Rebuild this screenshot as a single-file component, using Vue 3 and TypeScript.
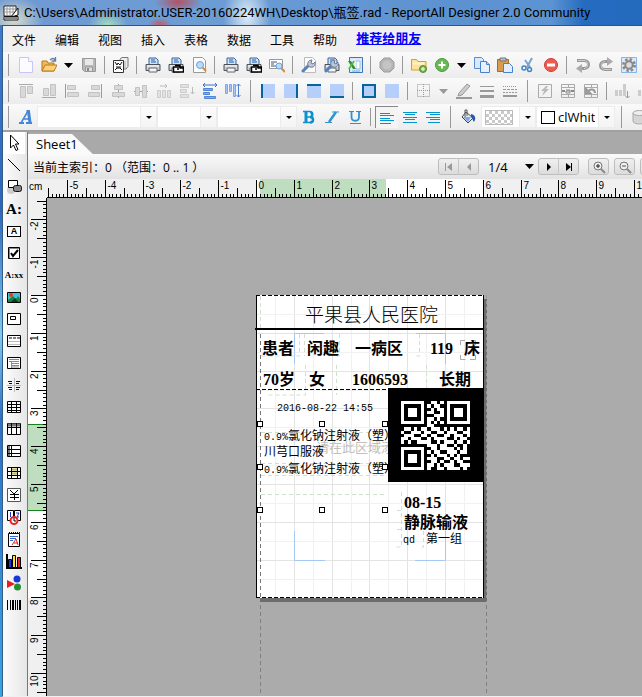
<script setup lang="ts">
import { computed, onBeforeUnmount, onMounted, ref } from 'vue'

interface ToolItem {
  kind: 'icon' | 'arrow' | 'sep' | 'group'
  name?: string
  label?: string
}

const icon = (name: string, label: string): ToolItem => ({ kind: 'icon', name, label })
const arrow: ToolItem = { kind: 'arrow' }
const sep: ToolItem = { kind: 'sep' }
const group: ToolItem = { kind: 'group' }

const printer =
  '<path d="M4 1h7l2 2v5H4z" fill="#cfe3fb" stroke="#3a6296"/><path d="M6 3h4M6 5h5" stroke="#1d5fb0"/><path d="M1 7.500h14v6H1z" fill="#c9cdd2" stroke="#4b5158"/><path d="M2 9h12" stroke="#fff"/><path d="M4 11h8v4H4z" fill="#f3f5f7" stroke="#666"/>'
const lens = (x: number, y: number, r: number) =>
  `<path d="M${x + 2} ${y + 2}l4 4" stroke="#d08b45" stroke-width="2"/><circle cx="${x}" cy="${y}" r="${r}" fill="#b7dbfb" stroke="#6ea3d8"/>`
const wrench =
  '<path d="M2 14l6-6" stroke="#5781bd" stroke-width="3" stroke-linecap="round"/><path d="M7 9c-1-4 1-6 4-6l-1 3 2 1 2-2c1 4-2 6-5 5z" fill="#bcc8da" stroke="#707b90"/>'

const icons: Record<string, string> = {
  app: '<path d="M1 1h12v10H1z" fill="#fff" stroke="#222"/><path d="M4 1v10M7 1v10M10 1v10M1 4h12M1 7h12" stroke="#999"/><path d="M15 3v7L8 12z" fill="#fff" stroke="#111"/><path d="M1 11.500h14v3.500H1z" fill="#fff" stroke="#111"/><path d="M3 12v2M5 12v2M7 12v2M9 12v2M11 12v2M13 12v2" stroke="#111"/>',
  new: '<path d="M1.500.5h9l4 4v11h-13z" fill="#fcfbff" stroke="#c9c6f5"/><path d="M10.500.5v4h4" fill="#fff" stroke="#c9c6f5"/>',
  open: '<path d="M1 14V4h5l1 2h6v8z" fill="#f2b95b" stroke="#b9781d"/><path d="M1 14l3-6h12l-3 6z" fill="#ffd27a" stroke="#b9781d"/><path d="M9 3c2-2 4-2 5 0M14.500 0v4h-4" fill="none" stroke="#617fa5" stroke-width="1.300"/>',
  save: '<path d="M1.500 1.500h13v13h-11l-2-2z" fill="#b8b8b8" stroke="#999"/><path d="M4 2h8v6H4z" fill="#e8e8e8"/><path d="M4.500 10h7v4.500h-7z" fill="#ddd" stroke="#999"/><path d="M6 11h2v3H6z" fill="#888"/>',
  preview:
    '<path d="M7 2l2-1.500h6v9L13 12H9z" fill="#eee" stroke="#777"/><path d="M.5 3.500h10v12H.5z" fill="#fff" stroke="#333"/><path d="M2 5l2 3 1-2 2 2 2-3M2 13l2-2h3l2 2M3 10h5" fill="none" stroke="#111"/><path d="M12 4v7" stroke="#aaa"/>',
  print: printer,
  printset: printer + '<path d="M5.500 10h10v5h-10z" fill="#fff" stroke="#000" stroke-width="1.500"/><path d="M7 8.500h5v3M12 11h3M9 12h2" stroke="#000" fill="none" stroke-width="1.500"/>',
  find: '<path d="M2.500.5h9l3 3v12h-12z" fill="#fbfbfb" stroke="#999"/>' + lens(9, 8, 3.5),
  findrec: '<path d="M.5 2.500h13v9H.5z" fill="#fff" stroke="#999"/><path d="M2 5h6M2 7h3M2 9h5" stroke="#456"/>' + lens(10, 9, 3),
  wrench: '<path d="M3.500.5h8l3 3v12h-11z" fill="#fbfbfb" stroke="#bbb"/>' + wrench,
  printwrench: printer + wrench,
  excel: '<path d="M2.500.5h13v15h-13z" fill="#dbe9fb" stroke="#3f74b8"/><path d="M9 4h4v8H9z" fill="#fff" stroke="#9bbce0"/><path d="M0 4h9v8H0z" fill="#e6f5e4"/><path d="M1 4h3l5 8H6z" fill="#2f8f35"/><path d="M8 4H6l-5 8h2z" fill="#57b257"/><path d="M5 14h8" stroke="#78aadd"/>',
  stop: '<path d="M5 1h6l4 4v6l-4 4H5l-4-4V5z" fill="#b5b5b5" stroke="#9c9c9c"/><circle cx="8" cy="8" r="4.500" fill="#c4c4c4"/>',
  folderadd:
    '<path d="M.5 13V2.500h5l1.500 2h8V13z" fill="#ffe39a" stroke="#d0a03e"/><path d="M2 6.500h11" stroke="#fff3cf" stroke-width="2"/><circle cx="12" cy="12" r="3.500" fill="#79b648" stroke="#568e2d"/><path d="M12 10v4M10 12h4" stroke="#fff"/>',
  add: '<circle cx="8" cy="8" r="6.500" fill="#67ba53" stroke="#4c9a3a"/><path d="M8 4.500v7M4.500 8h7" stroke="#fff" stroke-width="2"/>',
  copy: '<path d="M.5.5h7l2 2v9h-9z" fill="#d8e8fd" stroke="#5b8cd3"/><path d="M6.500 4.500h6l3 3v8h-9z" fill="#e6f1ff" stroke="#4a80cd"/><path d="M12.500 4.500v3h3" fill="#b8d2f5" stroke="#4a80cd"/>',
  paste:
    '<path d="M.5 2.500h11v12H.5z" fill="#d79c52" stroke="#a46c2a"/><path d="M3 1h6v3H3z" fill="#bcbcbc" stroke="#777"/><path d="M6.500 6.500h6l3 3v6h-9z" fill="#e1eefe" stroke="#4a80cd"/>',
  cut: '<path d="M12 1L7 10M5 3l5 7" stroke="#79a4cf" stroke-width="2"/><circle cx="4" cy="11" r="2" fill="none" stroke="#3f83c5" stroke-width="1.500"/><circle cx="9.500" cy="12.500" r="2" fill="none" stroke="#3f83c5" stroke-width="1.500"/>',
  del: '<circle cx="8" cy="8" r="6.500" fill="#ef5b51" stroke="#cf3d35"/><path d="M4 8h8" stroke="#fff" stroke-width="3"/>',
  undo: '<path d="M2 3.500h7c6 0 6 8 0 8H6" fill="none" stroke="#999" stroke-width="3"/><path d="M1 11.500l6-4.500v9z" fill="#aaa"/><path d="M3 3.500h6c5 0 5 8 0 8" fill="none" stroke="#ccc"/>',
  redo: '<path d="M14 12.500H7c-6 0-6-8 0-8h4" fill="none" stroke="#999" stroke-width="3"/><path d="M15 4.500L9 0v9z" fill="#aaa"/><path d="M13 12.500H7c-5 0-5-8 0-8" fill="none" stroke="#ccc"/>',
  gear: '<path d="M.5.5h15v15H.5z" fill="#dcebfc" stroke="#86b5ec"/><circle cx="8" cy="8" r="5.500" fill="none" stroke="#8a8a8a" stroke-width="3" stroke-dasharray="2.400 1.900"/><circle cx="8" cy="8" r="3.700" fill="#ddd" stroke="#8a8a8a" stroke-width="2"/>',
  al1: '<path d="M1 1.500h14" stroke="#aaa"/><path d="M2.500 3.500h5v11h-5zM9.500 3.500h5v7h-5z" fill="#d9d9d9" stroke="#c2c2c2"/>',
  al2: '<path d="M1 14.500h14" stroke="#aaa"/><path d="M2.500 5.500h5v7h-5zM9.500 1.500h5v11h-5z" fill="#d9d9d9" stroke="#c2c2c2"/>',
  al3: '<path d="M1.500 1v14" stroke="#999"/><path d="M3.500 2.500h8v4h-8zM3.500 9.500h11v4h-11z" fill="#d9d9d9" stroke="#c2c2c2"/>',
  al4: '<path d="M14.500 1v14" stroke="#999"/><path d="M4.500 2.500h8v4h-8zM1.500 9.500h11v4h-11z" fill="#d9d9d9" stroke="#c2c2c2"/>',
  al5: '<path d="M8.500 1v14" stroke="#999"/><path d="M4.500 2.500h8v4h-8zM2.500 9.500h12v4h-12z" fill="#d9d9d9" stroke="#c2c2c2"/>',
  al6: '<path d="M1 8.500h14" stroke="#999"/><path d="M2.500 4.500h4v8h-4zM9.500 2.500h4v12h-4z" fill="#d9d9d9" stroke="#c2c2c2"/>',
  al7: '<path d="M4 3h7M9 1l2 2-2 2" fill="none" stroke="#bbb"/><path d="M1.500 7.500h3v7h-3zM6.500 7.500h3v7h-3zM11.500 7.500h3v7h-3z" fill="#e2e2e2" stroke="#ccc"/>',
  al8: '<path d="M13.500 4v7M11.500 9l2 2 2-2" fill="none" stroke="#bbb"/><path d="M1.500 1.500h8v3h-8zM1.500 6.500h6v3h-6zM1.500 11.500h8v3h-8z" fill="#e2e2e2" stroke="#ccc"/>',
  al9: '<path d="M1 2h14M3 0L1 2l2 2M13 0l2 2-2 2" fill="none" stroke="#3a6fc4"/><path d="M1.500 5.500h9v2h-9zM1.500 9.500h6v2h-6zM2.500 13.500h11v2h-11z" fill="#7ea9ee" stroke="#5484d6"/>',
  al10: '<path d="M13.500 1v13M11.500 3l2-2 2 2M11.500 12l2 2 2-2" fill="none" stroke="#4c7fd0"/><path d="M.5 1.500h2v9h-2zM4.500 1.500h2v7h-2zM8.500 1.500h2v12h-2z" fill="#a9c6f5" stroke="#7fa6e6"/>',
  b1: '<path d="M1 1h14v14H1z" fill="#b5cffa"/><path d="M2 1v14" stroke="#05659c" stroke-width="2"/>',
  b2: '<path d="M1 1h14v14H1z" fill="#b5cffa"/><path d="M14 1v14" stroke="#05659c" stroke-width="2"/>',
  b3: '<path d="M1 1h14v14H1z" fill="#b5cffa"/><path d="M1 2h14" stroke="#05659c" stroke-width="2"/>',
  b4: '<path d="M1 1h14v14H1z" fill="#b5cffa"/><path d="M1 14h14" stroke="#05659c" stroke-width="2"/>',
  b5: '<path d="M2 2h12v12H2z" fill="#b5cffa" stroke="#05659c" stroke-width="2"/>',
  b6: '<path d="M1 1h14v14H1z" fill="#b5cffa"/>',
  b7: '<path d="M1.500 1.500h12v12h-12zM7.500 1v13M1 7.500h13" fill="none" stroke="#999" stroke-dasharray="1 1"/>',
  pen: '<path d="M3 10l8-9 3 2-8 9-4 1z" fill="#ccc" stroke="#999"/><path d="M0 15h16" stroke="#999" stroke-width="2"/>',
  lines: '<path d="M1 3.500h14" stroke="#999"/><path d="M1 8h14" stroke="#999" stroke-width="2"/><path d="M1 13.500h14" stroke="#999" stroke-width="3"/>',
  dashes: '<path d="M1 3.500h14" stroke="#999" stroke-dasharray="1 1"/><path d="M1 6.500h14" stroke="#999" stroke-dasharray="3 1"/><path d="M1 9.500h14" stroke="#999" stroke-dasharray="2 1"/><path d="M1 13h14" stroke="#999" stroke-width="2"/>',
  flash: '<path d="M1.500 1.500h13v13h-13z" fill="#f3f3f3" stroke="#aaa"/><path d="M9 3L4 8h3l-2 5 7-7H9l2-3z" fill="#bbb"/>',
  merge: '<path d="M1.500 1.500h13v13h-13zM1 4.500h14M1 11.500h14M8.500 1v3M8.500 12v3" fill="none" stroke="#aaa"/><path d="M2 8h3M11 8h3" stroke="#888" stroke-width="2"/><path d="M6 7h4v3H6V8h4" fill="none" stroke="#888"/>',
  split: '<path d="M1.500 1.500h13v13h-13zM1 4.500h14M1 11.500h14M8.500 1v3M8.500 12v3" fill="none" stroke="#aaa"/><path d="M3 6v4h4zM5 9c2-4 7-3 7 1" fill="none" stroke="#999" stroke-width="2"/>',
  cols: '<path d="M1.500 7v6M5.500 7v6" stroke="#ccc" stroke-width="3"/><path d="M9.500 1v12" stroke="#ccc" stroke-width="3"/><path d="M12.500 8v7M10.500 13l2 2 2-2" stroke="#999" fill="none"/>',
  fontA: '<path d="M1 14h5M8 14h6" stroke="#4385d7" stroke-width="2"/><path d="M3.500 13l6-10" stroke="#4385d7" stroke-width="1.500"/><path d="M8.500 2.500h2l1.500 11" fill="none" stroke="#4385d7" stroke-width="3"/><path d="M6 10h5" stroke="#4385d7" stroke-width="1.500"/>',
  bold: '<path d="M2 2.500h7M2 13.500h7M6 8h4" stroke="#0b91ce" stroke-width="1.500"/><path d="M5 2v12" stroke="#0b91ce" stroke-width="3"/><path d="M9 3c3 0 3 5 0 5c4 0 4 5.500 0 5.500" fill="none" stroke="#0b91ce" stroke-width="2.500"/>',
  italic: '<path d="M8 3h7M1 13.500h7" stroke="#2f94ce"/><path d="M12 3L5 13" stroke="#2f94ce" stroke-width="2.500"/>',
  under: '<path d="M2 2.500h5M9 2.500h5" stroke="#2f94ce"/><path d="M4.500 2v6c0 5 7.500 5 7.500 0V2" fill="none" stroke="#2f94ce" stroke-width="1.800"/><path d="M3 14.500h11" stroke="#2f94ce"/>',
  left: '<path d="M1 3.500h10M1 5.500h14M1 8.500h10M1 10.500h14M1 13.500h11" stroke="#0097cf"/>',
  center: '<path d="M1 3.500h14M3 5.500h10M1 8.500h14M3 10.500h10M1 13.500h14" stroke="#0097cf"/>',
  right: '<path d="M1 3.500h14M5 5.500h10M1 8.500h14M5 10.500h10M3 13.500h12" stroke="#0097cf"/>',
  bucket: '<path d="M6 3l7 6-5 5-6-6z" fill="#e7eef8" stroke="#444"/><path d="M7 7V1H5v7" fill="none" stroke="#555"/><path d="M11 5c5 1 5 5 3 8-2-2-1-4-3-5z" fill="#2957a8"/><path d="M3 8h8l-3 5z" fill="#7da8e6"/>',
  db: '<path d="M2 4v8c0 4 13 4 13 0V4" fill="#d5d5d5" stroke="#aaa"/><ellipse cx="8.500" cy="4" rx="6.500" ry="2.500" fill="#eee" stroke="#aaa"/>',
  pick: '<path d="M4.500 0v13l3-3 2.500 5.500 2-1L9.500 9H13z" fill="#fff" stroke="#000"/>',
  line: '<path d="M2 2l12 12" stroke="#000"/>',
  shapes: '<circle cx="5" cy="11" r="4" fill="#ccc"/><path d="M2.500 1.500h9v7h-9z" fill="#fff" stroke="#000"/><rect x="7.500" y="6.500" width="8" height="6" rx="2" fill="#888" stroke="#111"/>',
  checkbox: '<path d="M2.500 2.500h11v11h-11z" fill="#fff" stroke="#000"/><path d="M3 3.500h10M3.500 3v10" stroke="#888"/><path d="M5 8l2 3 5-6" fill="none" stroke="#000" stroke-width="2"/>',
  image: '<path d="M1.500 3.500h13v10h-13z" fill="#37c5e2" stroke="#000"/><path d="M2 11l5-4 3 3 2-3 2 3v3H2z" fill="#178540"/><circle cx="5" cy="6" r="2" fill="#e43b22"/><path d="M5 13l4-4 3 4z" fill="#073b24"/>',
  box: '<path d="M1.500 2.500h13v11h-13z" fill="#fff" stroke="#000"/><path d="M4.500 5.500h5v3h-5z" fill="#fff" stroke="#000"/>',
  band: '<path d="M1.500 2.500h13v11h-13z" fill="#fff" stroke="#000"/><path d="M3 5h11" stroke="#000" stroke-dasharray="3 1"/><path d="M2 8.500h12M2 11.500h12" stroke="#bbb"/>',
  sub: '<path d="M1.500 2.500h13v11h-13z" fill="#fff" stroke="#000"/><path d="M3 4.500h10M3 6.500h10M6 8.500h7M6 10.500h7M6 12h7M5.500 6v7" stroke="#888"/>',
  cross: '<path d="M8.500 1v14M1 8.500h14" stroke="#bbb"/><path d="M2 4.500h4M3 6.500h3M2 10.500h4M3 12.500h3M10 4.500h4M10 6.500h3M10 10.500h4M10 12.500h3" stroke="#111"/>',
  table: '<path d="M1.500 2.500h13v11h-13zM1 5.500h14M1 8.500h14M1 11.500h14M5.500 2v12M10.500 2v12" fill="#fff" stroke="#000"/>',
  colhead: '<path d="M1.500 2.500h13v11h-13z" fill="#fff" stroke="#000"/><path d="M2 4h12" stroke="#777" stroke-width="3"/><path d="M1 6.500h14M5.500 2v12M10.500 2v12" stroke="#000"/>',
  rowhead: '<path d="M1.500 2.500h13v11h-13z" fill="#fff" stroke="#000"/><path d="M3 3v10" stroke="#777" stroke-width="2"/><path d="M5.500 2v12M1 6.500h14M1 10.500h14" stroke="#000"/>',
  crosstab: '<path d="M1.500 2.500h13v11h-13z" fill="#fff" stroke="#000"/><path d="M5.500 2v12M11.500 2v12M1 6.500h14M1 10.500h14" stroke="#000"/><path d="M6 4.500h5M6 8.500h5" stroke="#c7b83e" stroke-width="2"/>',
  money: '<path d="M1.500 1.500h13v13h-13z" fill="#fff" stroke="#555"/><path d="M4 3l4 4 4-4M8.500 7v6M4 7.500h9M4 10.500h9" fill="none" stroke="#000"/>',
  pages: '<path d="M1.500 1.500h6v10h-6zM8.500 1.500h6v10h-6z" fill="#fff" stroke="#000"/><path d="M4.500 3v5M10 4h3l-2 4h2" stroke="#2233bb" fill="none"/><circle cx="8" cy="11.500" r="3.500" fill="#fff" stroke="#e22" stroke-width="2"/><path d="M8 9v3h2" stroke="#000" fill="none"/>',
  note: '<path d="M2.500 2.500h11v13h-11z" fill="#fff" stroke="#000"/><path d="M3 1.500h11" stroke="#000" stroke-dasharray="1 1"/><path d="M4 5.500h8M4 7.500h6M4 9.500h3" stroke="#36c"/><path d="M6 14l4-6 2 6M8 12h4" fill="none" stroke="#d22"/>',
  chart: '<path d="M1 1v14h15" stroke="#000" stroke-width="2" fill="none"/><path d="M2.500 6.500h3v8h-3z" fill="#1438e8" stroke="#000"/><path d="M6.500 2.500h3v12h-3z" fill="#ffe322" stroke="#000"/><path d="M11.500 4.500h3v10h-3z" fill="#e82222" stroke="#000"/>',
  balls: '<circle cx="11" cy="4" r="3.500" fill="#1737d8"/><path d="M1 5l8 4-8 4z" fill="#e61f1f"/><circle cx="11.500" cy="12" r="3.500" fill="#25902f"/>',
  barcode: '<path d="M1.500 3v10M4.500 3v10M9.500 3v10M11.500 3v10" stroke="#000"/><path d="M7 3v10M14 3v10" stroke="#000" stroke-width="2"/>',
  first: '<path d="M4.500 4v8" stroke="#999"/><path d="M11 4v8L6 8z" fill="#999"/>',
  prev: '<path d="M10 4v8L6 8z" fill="#999"/>',
  next: '<path d="M6 4v8l4-4z" fill="#000"/>',
  last: '<path d="M10.500 4v8" stroke="#000"/><path d="M5 4v8l5-4z" fill="#000"/>',
  zin: '<path d="M10 10l4 4" stroke="#888" stroke-width="2"/><circle cx="7" cy="7" r="4" fill="#eee" stroke="#777"/><path d="M7 5v4M5 7h4" stroke="#222"/>',
  zout: '<path d="M10 10l4 4" stroke="#888" stroke-width="2"/><circle cx="7" cy="7" r="4" fill="#eee" stroke="#777"/><path d="M5 7h4" stroke="#555"/>',
}

const menus = ['文件', '编辑', '视图', '插入', '表格', '数据', '工具', '帮助']

const standardBar: ToolItem[] = [
  icon('new', 'New'), icon('open', 'Open'), arrow, icon('save', 'Save'), sep,
  icon('preview', 'Page setup'), sep,
  icon('print', 'Print'), icon('printset', 'Print settings'), icon('find', 'Preview'), sep,
  icon('print', 'Print report'), icon('printset', 'Report print settings'), icon('findrec', 'Report preview'), sep,
  icon('wrench', 'Options'), icon('printwrench', 'Printer options'), icon('excel', 'Export'), sep,
  icon('stop', 'Stop'), sep,
  icon('folderadd', 'Add folder'), icon('add', 'Add'), arrow,
  icon('copy', 'Copy'), icon('paste', 'Paste'), icon('cut', 'Cut'), icon('del', 'Delete'), sep,
  icon('undo', 'Undo'), icon('redo', 'Redo'), icon('gear', 'Settings'),
]

const layoutBar: ToolItem[] = [
  ...['al1', 'al2', 'al3', 'al4', 'al5', 'al6', 'al7', 'al8', 'al9', 'al10'].map((n, i) => icon(n, `Align ${i + 1}`)),
  group,
  icon('b1', 'Left border'), icon('b2', 'Right border'), icon('b3', 'Top border'), icon('b4', 'Bottom border'), sep,
  icon('b5', 'Outline'), icon('b6', 'No border'), sep,
  icon('b7', 'Grid border'), arrow, icon('pen', 'Line colour'), icon('lines', 'Line width'), icon('dashes', 'Line style'), group,
  icon('flash', 'Quick cell'), icon('merge', 'Merge cells'), icon('split', 'Split cells'), sep,
  icon('cols', 'Insert column'), icon('cols', 'Delete column'),
]

interface PaletteItem { name?: string; text?: string; label: string }
const palette: PaletteItem[] = [
  { name: 'pick', label: 'Select' }, { name: 'line', label: 'Line' }, { name: 'shapes', label: 'Shape' },
  { text: 'A:', label: 'Label' }, { text: 'A', label: 'Text box' }, { name: 'checkbox', label: 'Check box' },
  { text: 'A:xx', label: 'Field' }, { name: 'image', label: 'Image' }, { name: 'box', label: 'Panel' },
  { name: 'band', label: 'Band' }, { name: 'sub', label: 'Sub report' }, { name: 'cross', label: 'Cross' },
  { name: 'table', label: 'Table' }, { name: 'colhead', label: 'Column header' }, { name: 'rowhead', label: 'Row header' },
  { name: 'crosstab', label: 'Cross table' }, { name: 'money', label: 'Currency' }, { name: 'pages', label: 'Page number' },
  { name: 'note', label: 'Note' }, { name: 'chart', label: 'Chart' }, { name: 'balls', label: 'Graph' },
  { name: 'barcode', label: 'Barcode' },
]

const CM = 37.8
const ORIGIN_X = 209
const ORIGIN_Y = 97

interface Tick { pos: number; level: number; text: string }
function ticks(origin: number, length: number): Tick[] {
  const out: Tick[] = []
  const first = Math.ceil((-origin * 10) / CM)
  const last = Math.floor(((length - origin) * 10) / CM)
  for (let i = first; i <= last; i++) {
    const level = i % 10 === 0 ? 2 : i % 5 === 0 ? 1 : 0
    out.push({ pos: Math.round(origin + (i * CM) / 10) + 0.5, level, text: level === 2 ? String(i / 10) : '' })
  }
  return out
}

const surface = ref<SVGSVGElement>()
const extent = ref({ w: 0, h: 0 })
const measure = () => {
  const box = surface.value?.getBoundingClientRect()
  if (box) extent.value = { w: box.width, h: box.height }
}
onMounted(() => {
  measure()
  window.addEventListener('resize', measure)
})
onBeforeUnmount(() => window.removeEventListener('resize', measure))

const hTicks = computed(() => ticks(ORIGIN_X, extent.value.w))
const vTicks = computed(() => ticks(ORIGIN_Y, extent.value.h))
const hLen = [4, 10, 18]
const vLen = [4, 10, 16]

const gridX = Array.from({ length: 11 }, (_, i) => ({ p: Math.round((i + 1) * 18.9) + 0.5, major: i % 2 === 1 }))
const gridY = Array.from({ length: 15 }, (_, i) => ({ p: Math.round((i + 1) * 18.9) + 0.5, major: i % 2 === 1 }))

const qr = [
  '111111100110101111111',
  '100000101011001000001',
  '101110100101101011101',
  '101110101100101011101',
  '101110100011101011101',
  '100000101101001000001',
  '111111101010101111111',
  '000000001100000000000',
  '011010110111010101101',
  '100111011001101110011',
  '011100110110011011101',
  '110111001011110010110',
  '101001111001011101101',
  '000000001110110010010',
  '111111100110111101010',
  '100000101011001110110',
  '101110100101110101000',
  '101110101110011011011',
  '101110100110100101100',
  '100000101101011100111',
  '111111101001101111010',
]
const qrCells = qr.flatMap((row, y) => [...row].map((v, x) => ({ x, y, on: v === '1' }))).filter((c) => c.on)

const handles = [4, 66, 129]
  .flatMap((x) => [129, 172, 215].map((y) => ({ x, y })))
  .filter((h) => !(h.x === 66 && h.y === 172))
</script>

<template>
  <div class="app">
    <header class="title">
      <svg class="ico" viewBox="0 0 16 16" v-html="icons.app" />
      <h1>C:\Users\Administrator.USER-20160224WH\Desktop\瓶签.rad - ReportAll Designer 2.0 Community</h1>
    </header>

    <div class="frame">
      <nav class="menu">
        <button v-for="m in menus" :key="m" type="button">{{ m }}</button>
        <a href="#">推荐给朋友</a>
      </nav>

      <div v-for="(bar, b) in [standardBar, layoutBar]" :key="b" class="bar">
        <span class="grip" />
        <template v-for="(t, i) in bar" :key="i">
          <button v-if="t.kind === 'icon'" type="button" class="tool" :aria-label="t.label">
            <svg class="ico" viewBox="0 0 16 16" v-html="icons[t.name ?? '']" />
          </button>
          <button v-else-if="t.kind === 'arrow'" type="button" class="drop" :class="{ dim: b === 1 }" aria-label="More">
            <svg width="9" height="5" viewBox="0 0 9 5"><path d="M0 0h9L4.500 5z" fill="currentColor" /></svg>
          </button>
          <span v-else :class="t.kind" />
        </template>
      </div>

      <div class="bar">
        <span class="grip" />
        <button type="button" class="tool" aria-label="Font"><svg class="ico" viewBox="0 0 16 16" v-html="icons.fontA" /></button>
        <label class="combo font"><select aria-label="Font name"><option></option></select><i /></label>
        <label class="combo style"><select aria-label="Font style"><option></option></select><i /></label>
        <label class="combo size"><select aria-label="Font size"><option></option></select><i /></label>
        <button v-for="n in ['bold', 'italic', 'under']" :key="n" type="button" class="tool" :aria-label="n">
          <svg class="ico" viewBox="0 0 16 16" v-html="icons[n]" />
        </button>
        <span class="sep" />
        <button v-for="n in ['left', 'center', 'right']" :key="n" type="button" class="tool" :class="{ pressed: n === 'left' }" :aria-label="n">
          <svg class="ico" viewBox="0 0 16 16" v-html="icons[n]" />
        </button>
        <span class="group" />
        <button type="button" class="tool" aria-label="Fill"><svg class="ico" viewBox="0 0 16 16" v-html="icons.bucket" /></button>
        <label class="combo pattern"><select aria-label="Pattern"><option></option></select><b class="checker" /><i /></label>
        <label class="combo color"><b class="swatch" /><select aria-label="Colour"><option>clWhite</option></select><i /></label>
        <span class="group" />
        <button type="button" class="tool" aria-label="Database"><svg class="ico" viewBox="0 0 16 16" v-html="icons.db" /></button>
      </div>

      <div class="work">
        <aside class="palette">
          <button v-for="(p, i) in palette" :key="p.label" type="button" :class="{ active: i === 0 }" :aria-label="p.label">
            <svg v-if="p.name" class="ico" viewBox="0 0 16 16" v-html="icons[p.name]" />
            <span v-else :class="['glyph', { big: p.text === 'A:', boxed: p.text === 'A' }]">{{ p.text }}</span>
          </button>
        </aside>

        <main>
          <div class="tabs"><button type="button" class="tab">Sheet1</button></div>
          <div class="info">
            <span class="status">当前主索引：0 （范围：0 .. 1 ）</span>
            <div class="pair">
              <button type="button" aria-label="First"><svg class="ico" viewBox="0 0 16 16" v-html="icons.first" /></button>
              <button type="button" aria-label="Previous"><svg class="ico" viewBox="0 0 16 16" v-html="icons.prev" /></button>
            </div>
            <button type="button" class="page">1/4 <svg width="9" height="5" viewBox="0 0 9 5"><path d="M0 0h9L4.500 5z" /></svg></button>
            <div class="pair">
              <button type="button" aria-label="Next"><svg class="ico" viewBox="0 0 16 16" v-html="icons.next" /></button>
              <button type="button" aria-label="Last"><svg class="ico" viewBox="0 0 16 16" v-html="icons.last" /></button>
            </div>
            <div class="zooms">
              <button type="button" class="zoom" aria-label="Zoom in"><svg class="ico" viewBox="0 0 16 16" v-html="icons.zin" /></button>
              <button type="button" class="zoom" aria-label="Zoom out"><svg class="ico" viewBox="0 0 16 16" v-html="icons.zout" /></button>
              <button type="button" class="zoom" aria-label="Fit" />
            </div>
          </div>

          <div class="design">
            <span class="unit">cm</span>
            <svg class="hruler">
              <rect x="209" width="228" height="19" fill="#fff" />
              <rect x="213" width="126" height="19" fill="#bfddbf" />
              <g v-for="(t, i) in hTicks" :key="i">
                <path :d="`M${t.pos} 19v${-hLen[t.level]}`" stroke="#000" />
                <text v-if="t.text" :x="t.pos + 2" y="10">{{ t.text }}</text>
              </g>
              <rect y="18" width="100%" height="1" />
            </svg>
            <svg class="vruler">
              <rect y="97" width="19" height="303" fill="#fff" />
              <rect y="226" width="19" height="87" fill="#bfddbf" />
              <path d="M0 226.500h19M0 312.500h19" stroke="#178217" />
              <g v-for="(t, i) in vTicks" :key="i">
                <path :d="`M19 ${t.pos}h${-vLen[t.level]}`" stroke="#000" />
                <text v-if="t.text" :transform="`translate(10 ${t.pos + 2}) rotate(-90)`" text-anchor="end">{{ t.text }}</text>
              </g>
              <rect x="18" width="1" height="100%" />
            </svg>

            <svg ref="surface" class="canvas">
              <g :transform="`translate(${ORIGIN_X} ${ORIGIN_Y})`">
                <path d="M4.500 303v800M230.500 303v800" stroke="#808080" stroke-dasharray="4 3" />
                <rect x="4" y="4" width="227" height="303" fill="#6c6c6c" />
                <path d="M230.500 0v307" stroke="#999" stroke-dasharray="3 3" />
                <rect width="228" height="303" fill="#fff" />
                <path v-for="g in gridX" :key="'x' + g.p" :d="`M${g.p} 1v301`" :stroke="g.major ? '#e3e3e3' : '#f1f1f1'" />
                <path v-for="g in gridY" :key="'y' + g.p" :d="`M1 ${g.p}h226`" :stroke="g.major ? '#e3e3e3' : '#f1f1f1'" />
                <path d="M4.500 1v32M43.500 39v22H5M48.500 39v22M83.500 39v22h-5M163.500 39v22h-5M49.500 70v30H12M80.500 70v30M170.500 70v30M5 137.500h124M5 168.500h124M5 180.500h124M5 199.500h124M145.500 197v55h-5M141 215.500h5M141 234.500h5M167.500 236v16h-5" fill="none" stroke="#cfe0cf" stroke-dasharray="4 3" />
                <path d="M4.500 39v264" stroke="#777" stroke-dasharray="4 3" />
                <path d="M38.500 69V38.500H68M160 38.500h29.500V69M38.500 236v29.500H69M159 265.500h30.500V236" fill="none" stroke="#a5c9f2" />
                <path d="M209 45.500h-4.500V50M215 45.500h4.500V50M204.500 60v4.500h5M214 64.500h5.500V60" fill="none" stroke="#aaa" />
                <path d="M.5 0v303M227.500 0v303" stroke="#000" />
                <path d="M0 .5h228M0 302.500h228" stroke="#000" stroke-dasharray="4 2" />
                <path d="M0 94.500h228" stroke="#000" stroke-dasharray="4 2" />
                <rect x="-1" y="33" width="229" height="2" />

                <text class="ghost" x="60" y="157">请在此区域添</text>
                <text class="head" x="49" y="27">平果县人民医院</text>
                <g class="strong">
                  <text x="6" y="59">患者</text>
                  <text x="51" y="59">闲趣</text>
                  <text x="99" y="59">一病区</text>
                  <text x="174" y="59">119</text>
                  <text x="208" y="59">床</text>
                  <text x="7" y="90">70岁</text>
                  <text x="53" y="90">女</text>
                  <text x="96" y="90">1606593</text>
                  <text x="183" y="90">长期</text>
                  <text x="148" y="213">08-15</text>
                  <text x="148" y="233">静脉输液</text>
                </g>
                <g class="plain">
                  <text x="21" y="116"><tspan class="mono">2016-08-22 14:55</tspan></text>
                  <text x="8" y="145"><tspan class="mono">0.9%</tspan>氯化钠注射液（塑）</text>
                  <text x="8" y="161">川芎口服液</text>
                  <text x="8" y="178"><tspan class="mono">0.9%</tspan>氯化钠注射液（塑）</text>
                  <text x="147" y="248"><tspan class="mono">qd</tspan></text>
                  <text x="170" y="248">第一组</text>
                </g>

                <rect x="132" y="93" width="96" height="94" />
                <svg x="145" y="106" width="69" height="69" viewBox="0 0 21 21" shape-rendering="crispEdges">
                  <rect v-for="c in qrCells" :key="`${c.x}-${c.y}`" :x="c.x" :y="c.y" width="1" height="1" fill="#fff" />
                </svg>
                <rect v-for="h in handles" :key="`${h.x}-${h.y}`" :x="h.x - 2.5" :y="h.y - 2.5" width="5" height="5" fill="#fff" stroke="#000" />
              </g>
            </svg>
          </div>
        </main>
      </div>
    </div>
  </div>
</template>

<style>
body {
  margin: 0;
  background: #f0f0f0;
}
</style>

<style scoped>
.app {
  height: 100vh;
  display: flex;
  flex-direction: column;
  overflow: hidden;
  background: linear-gradient(#3f7dcd, #2f66bb 30%, #7fcdec 48%, #2f6fc2 60%, #3ba5e0);
  font-family: "Open Sans", "Noto Sans CJK SC", sans-serif;
  font-size: 12px;
  color: #000;
}
button,
select {
  font: inherit;
  color: inherit;
  border: 0;
  padding: 0;
  margin: 0;
  background: none;
}
.ico {
  display: block;
  flex: none;
  width: 16px;
  height: 16px;
}
.title {
  flex: none;
  height: 25px;
  display: flex;
  align-items: center;
  gap: 5px;
  padding-left: 3px;
  background:
    radial-gradient(ellipse 30px 24px at 14px 20px, #d6dccb, transparent),
    radial-gradient(ellipse 20px 12px at 108px 24px, #a2d9bd, transparent),
    radial-gradient(ellipse 24px 10px at 178px 2px, #b5505f, transparent),
    radial-gradient(ellipse 12px 6px at 160px 24px, #b8606c, transparent),
    radial-gradient(ellipse 24px 36px at 247px 16px, #e0edf6, transparent),
    linear-gradient(90deg, #6f98d2, #6d9dd5 30%, #5d92d0 70%, #5b93d3 86%, #256bbf 91%, #246abd);
}
.title h1 {
  margin: 0;
  font-family: Roboto, "Noto Sans CJK SC", sans-serif;
  font-size: 13px;
  font-weight: 400;
  line-height: 20px;
  white-space: nowrap;
}
.frame {
  flex: 1;
  min-height: 0;
  display: flex;
  flex-direction: column;
  margin-left: 2px;
  border-left: 1px solid #345c8b;
  border-top: 1px solid #33527c;
  border-bottom: 1px solid #f0f0f0;
  background: #f0f0f0;
}
.menu {
  flex: none;
  height: 26px;
  display: flex;
  align-items: center;
  gap: 19px;
  padding-left: 9px;
  white-space: nowrap;
}
.menu a {
  color: #00f;
  font-size: 13px;
  font-weight: 700;
  line-height: 16px;
  padding-bottom: 2px;
}
.menu button {
  padding-top: 2px;
}
.bar {
  flex: none;
  height: 26px;
  display: flex;
  align-items: center;
  overflow: hidden;
  background: linear-gradient(#fafafa, #ececec);
}
.grip {
  flex: none;
  box-sizing: border-box;
  width: 6px;
  height: 22px;
  margin-right: 5px;
  border-right: 1px solid #999;
}
.tool {
  flex: none;
  width: 23px;
  height: 22px;
  display: flex;
  align-items: center;
  justify-content: center;
}
.pressed {
  box-sizing: border-box;
  border-left: 1px solid #888;
  border-top: 1px solid #888;
  background: #f4f4f4;
}
.drop {
  flex: none;
  width: 17px;
  display: flex;
  justify-content: center;
}
.dim {
  color: #999;
}
.sep,
.group {
  flex: none;
  width: 9px;
  height: 18px;
  background: linear-gradient(#999, #999) center / 1px 100% no-repeat;
}
.group {
  width: 12px;
  height: 22px;
}
.combo {
  flex: none;
  box-sizing: border-box;
  height: 22px;
  display: flex;
  align-items: center;
  background: #fff;
  border: 1px solid #ececec;
}
.combo select {
  flex: 1;
  min-width: 0;
  height: 20px;
  appearance: none;
  font-size: 13px;
}
.combo i {
  flex: none;
  width: 15px;
  height: 20px;
  border-left: 1px solid #ececec;
  background: linear-gradient(#fcfcfc, #f4f4f4);
  display: flex;
  align-items: center;
  justify-content: center;
}
.combo i::before {
  content: "";
  border: 3px solid transparent;
  border-top-color: #000;
  border-bottom: 0;
}
.font {
  width: 120px;
}
.style {
  width: 60px;
}
.size {
  width: 80px;
}
.pattern {
  width: 55px;
  margin-left: 2px;
}
.pattern select {
  width: 4px;
}
.color {
  width: 79px;
  gap: 3px;
}
.color select {
  overflow: hidden;
  text-overflow: clip;
}
.checker {
  width: 26px;
  height: 13px;
  margin-right: 6px;
  border: 1px solid #bbb;
  background: conic-gradient(#c9c9c9 25%, #fff 0 50%, #c9c9c9 0 75%, #fff 0) 0 0 / 6px 6px;
}
.swatch {
  width: 12px;
  height: 11px;
  margin-left: 4px;
  border: 1px solid #000;
  background: #fff;
}
.work {
  flex: 1;
  min-height: 0;
  display: flex;
  border-top: 2px solid #a0a0a0;
}
.palette {
  flex: none;
  width: 24px;
  display: flex;
  flex-direction: column;
  overflow: hidden;
  border-right: 1px solid #777;
  background: linear-gradient(90deg, #fcfcfc, #e6e6e6);
}
.palette button {
  flex: none;
  width: 22px;
  height: 22px;
  display: flex;
  align-items: center;
  justify-content: center;
}
.palette .active {
  background: #fff;
}
.glyph {
  font: 700 9px "Liberation Serif", serif;
}
.big {
  font-size: 15px;
}
.boxed {
  width: 12px;
  border: 1px solid #000;
  background: #fff;
  line-height: 9px;
  font-family: "Liberation Sans", sans-serif;
}
main {
  flex: 1;
  min-width: 0;
  display: flex;
  flex-direction: column;
}
.tabs {
  flex: none;
  height: 22px;
  display: flex;
  align-items: flex-end;
  background: #a9a9a9;
}
.tab {
  height: 20px;
  padding: 0 15px 0 8px;
  font-size: 13px;
  line-height: 20px;
  background: #fafafa;
  clip-path: polygon(0 0, 68% 0, 100% 100%, 0 100%);
}
.info {
  flex: none;
  height: 25px;
  display: flex;
  align-items: center;
  overflow: hidden;
  background: linear-gradient(#fafafa, #e2e2e2);
}
.status {
  flex: 1;
  padding-left: 5px;
  white-space: nowrap;
}
.pair,
.zoom {
  flex: none;
  box-sizing: border-box;
  height: 17px;
  display: flex;
  align-items: center;
  justify-content: center;
  border: 1px solid #bdbdbd;
  border-radius: 3px;
  background: linear-gradient(#f0f0f0, #dcdcdc);
}
.pair {
  width: 41px;
}
.pair button {
  flex: 1;
  display: flex;
  justify-content: center;
}
.pair button + button {
  border-left: 1px solid #c6c6c6;
}
.page {
  flex: none;
  width: 59px;
  padding: 0 4px 0 9px;
  display: flex;
  align-items: center;
  justify-content: space-between;
  font-size: 13px;
}
.zooms {
  flex: none;
  width: 63px;
  display: flex;
  gap: 5px;
  padding-left: 9px;
  overflow: hidden;
  box-sizing: border-box;
}
.zoom {
  width: 21px;
}
.design {
  flex: 1;
  min-height: 0;
  display: grid;
  grid-template: 19px minmax(0, 1fr) / 19px minmax(0, 1fr);
  background: #ababab;
}
.design svg {
  display: block;
}
.unit {
  font: 10px/15px "Liberation Sans", sans-serif;
  padding-left: 1px;
  background: #f0f0f0;
}
.hruler,
.vruler {
  width: 100%;
  height: 100%;
  overflow: hidden;
  background: #f0f0f0;
  font: 10px "Liberation Sans", sans-serif;
}
.canvas {
  width: 100%;
  height: 100%;
  overflow: hidden;
}
.canvas text {
  font-family: "Liberation Serif", "Noto Sans CJK SC", serif;
}
.head {
  font-size: 19px;
  font-weight: 300;
}
.strong {
  font-size: 16px;
  font-weight: 700;
}
.plain {
  font-size: 12px;
}
.canvas .mono {
  font-family: "Liberation Mono", monospace;
  font-size: 10px;
}
.ghost {
  font-size: 13px;
  fill: #c4bfba;
}
</style>
